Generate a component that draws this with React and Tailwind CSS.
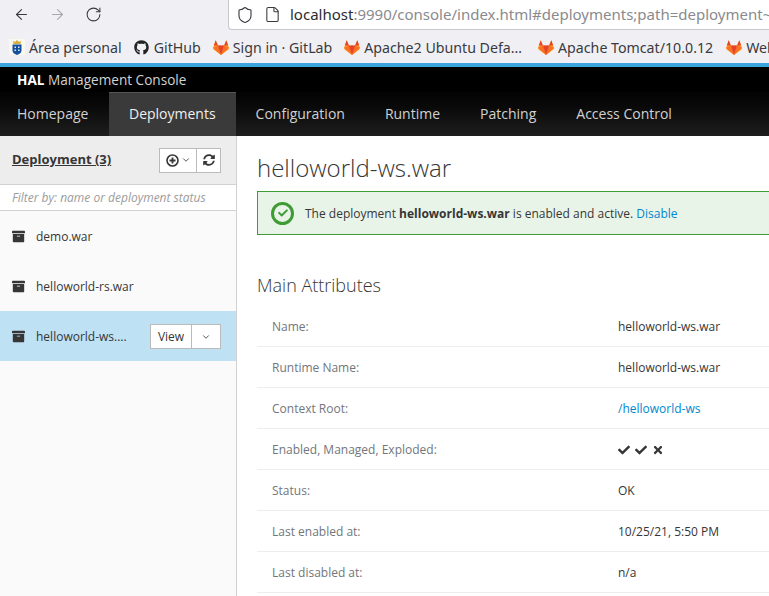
import { ArrowLeft, ArrowRight, RotateCw, Shield, File, ChevronDown } from 'lucide-react';
import { FaCheck, FaTimes, FaArchive, FaGithub, FaSyncAlt } from 'react-icons/fa';

const navItems = ['Homepage', 'Deployments', 'Configuration', 'Runtime', 'Patching', 'Access Control'];

const attributes = [
  { label: 'Name:', value: 'helloworld-ws.war' },
  { label: 'Runtime Name:', value: 'helloworld-ws.war' },
  { label: 'Context Root:', value: '/helloworld-ws', link: true },
  { label: 'Enabled, Managed, Exploded:', flags: true },
  { label: 'Status:', value: 'OK' },
  { label: 'Last enabled at:', value: '10/25/21, 5:50 PM' },
  { label: 'Last disabled at:', value: 'n/a' },
];

function GitlabIcon() {
  return (
    <svg width="16" height="15" viewBox="0 0 16 15" className="shrink-0">
      <path d="M8 15 0.5 9.5 0 7.8 2.7 0.2 4.9 5.6H11.1L13.3 0.2 16 7.8 15.5 9.5Z" fill="#fca326" />
      <path d="M8 15 0 7.8 4.9 5.6ZM8 15 16 7.8 11.1 5.6Z" fill="#fc6d26" />
      <path d="M8 15 4.9 5.6H11.1Z" fill="#e24329" />
      <path d="M2.7 0.2 4.9 5.6H0.9ZM13.3 0.2 11.1 5.6H15.1Z" fill="#e24329" />
    </svg>
  );
}

function CanaryIcon() {
  return (
    <svg width="16" height="16" viewBox="0 0 16 16" className="shrink-0">
      <rect width="16" height="16" fill="#fbf8ee" />
      <path d="M4.5 5 4 1.8 6 3 8 1 10 3 12 1.8 11.5 5Z" fill="#d9ad3c" />
      <path d="M3.5 5.5H12.5V11.5C12.5 14 10 15.2 8 16 6 15.2 3.5 14 3.5 11.5Z" fill="#14509e" />
      <path d="M5.5 7.5H7V9H5.5ZM9 7.5H10.5V9H9ZM5.5 10.5H7V12H5.5ZM9 10.5H10.5V12H9Z" fill="#dfe8f4" />
    </svg>
  );
}

function Bookmark({ icon, label, className }) {
  return (
    <div className={`flex items-center gap-[4px] shrink-0 ${className}`}>
      {icon}
      <span className="whitespace-nowrap">{label}</span>
    </div>
  );
}

function BrowserChrome() {
  return (
    <div className="bg-[#f0f0f4] text-[#3a3a40] font-['Noto_Sans',sans-serif]">
      <div className="h-[30px] flex items-start">
        <div className="w-[228px] flex items-center pl-[13px] pt-[6px] shrink-0">
          <ArrowLeft size={17} strokeWidth={1.5} />
          <ArrowRight size={17} strokeWidth={1.5} className="ml-[19px] text-[#a8a8ac]" />
          <RotateCw size={17} strokeWidth={1.5} className="ml-[19px]" />
        </div>
        <div className="flex-1 h-[30px] bg-white border-l border-b border-[#c8c8cc] rounded-bl-[4px] flex items-center pl-[7px] overflow-hidden">
          <Shield size={18} strokeWidth={1.5} className="shrink-0" />
          <File size={17} strokeWidth={1.5} className="ml-[10px] shrink-0" />
          <span className="ml-[9px] text-[15px] whitespace-nowrap text-[#8a8a8e]">
            <span className="text-[#2b2b30]">localhost</span>:9990/console/index.html#deployments;path=deployment~
          </span>
        </div>
      </div>
      <div className="h-[33px] flex items-center pt-[2px] pl-[9px] text-[14.2px] overflow-hidden">
        <Bookmark icon={<CanaryIcon />} label="Área personal" />
        <Bookmark className="ml-[12px] gap-[5px]" icon={<FaGithub size={15} className="text-[#222]" />} label="GitHub" />
        <Bookmark className="ml-[12px] gap-[3px]" icon={<GitlabIcon />} label="Sign in · GitLab" />
        <Bookmark className="ml-[12px]" icon={<GitlabIcon />} label="Apache2 Ubuntu Defa…" />
        <Bookmark className="ml-[16px]" icon={<GitlabIcon />} label="Apache Tomcat/10.0.12" />
        <Bookmark className="ml-[13px]" icon={<GitlabIcon />} label="Wel" />
      </div>
    </div>
  );
}

function TopNav() {
  return (
    <>
      <div className="h-[4px] bg-[#39a5dc]" />
      <div className="h-[25px] bg-black text-[13.6px] leading-[25px] pl-[17px] text-[#d1d1d1]">
        <span className="font-bold text-white">HAL</span> Management Console
      </div>
      <div className="h-[44px] flex bg-gradient-to-b from-[#030303] to-[#1e1e1e] text-[14px] text-[#d1d1d1]">
        {navItems.map((item) => (
          <div
            key={item}
            className={`px-[20px] first:pl-[17px] first:pr-[20.6px] pb-[2px] flex items-center ${item === 'Deployments' ? 'bg-[#3a3a3a] border-t border-[#555] text-[#f0f0f0]' : ''}`}
          >
            {item}
          </div>
        ))}
      </div>
    </>
  );
}

function Sidebar() {
  return (
    <div className="w-[237px] shrink-0 bg-[#fafafa] border-r border-[#d1d1d1] text-[#363636]">
      <div className="h-[48px] bg-[#ededed] flex items-center justify-between pl-[12px] pr-[15px]">
        <span className="font-bold text-[13px] underline">Deployment (3)</span>
        <div className="flex h-[25px] bg-white border border-[#bbb]">
          <div className="w-[37px] flex items-center justify-center border-r border-[#bbb] gap-[2px]">
            <svg width="13" height="13" viewBox="0 0 13 13" fill="none" stroke="#363636" className="shrink-0">
              <circle cx="6.5" cy="6.5" r="5.5" strokeWidth="1.6" />
              <path d="M6.5 3.5V9.5M3.5 6.5H9.5" strokeWidth="1.8" />
            </svg>
            <ChevronDown size={10} className="shrink-0" />
          </div>
          <div className="w-[23px] flex items-center justify-center">
            <FaSyncAlt size={12} />
          </div>
        </div>
      </div>
      <div className="h-[27px] bg-white border-y border-[#d1d1d1] pl-[12px] flex items-center text-[12px] italic text-[#9c9c9c]">
        Filter by: name or deployment status
      </div>
      <div className="h-[50px] flex items-center pl-[12px] text-[12px]">
        <FaArchive size={13} />
        <span className="ml-[11px] pt-[2px]">demo.war</span>
      </div>
      <div className="h-[50px] flex items-center pl-[12px] text-[12px]">
        <FaArchive size={13} />
        <span className="ml-[11px] pt-[2px]">helloworld-rs.war</span>
      </div>
      <div className="h-[50px] flex items-center pl-[12px] pr-[15px] text-[12px] bg-[#bee1f4]">
        <FaArchive size={13} />
        <span className="ml-[11px] pt-[2px]">helloworld-ws....</span>
        <div className="ml-auto flex h-[25px] mt-[1px] bg-white border border-[#bbb]">
          <div className="w-[41px] flex items-center justify-center border-r border-[#bbb] font-medium">View</div>
          <div className="w-[28px] flex items-center justify-center">
            <ChevronDown size={10} />
          </div>
        </div>
      </div>
    </div>
  );
}

function Content() {
  return (
    <div className="flex-1 min-w-0 pl-[20px] text-[#363636] overflow-hidden">
      <h1 className="mt-[16px] text-[24px] leading-[32px] font-light">helloworld-ws.war</h1>
      <div className="mt-[7px] h-[44px] w-[700px] bg-[#e9f4e9] border border-[#3f9c35] flex items-center pl-[13px] text-[12px]">
        <div className="w-[23px] h-[23px] rounded-full border-[3px] border-[#3f9c35] flex items-center justify-center shrink-0">
          <FaCheck size={10} className="text-[#3f9c35]" />
        </div>
        <span className="ml-[11px] pt-[2px]">
          The deployment <b>helloworld-ws.war</b> is enabled and active. <span className="text-[#0088ce]">Disable</span>
        </span>
      </div>
      <h2 className="mt-[37px] text-[18px] leading-[26px] font-light">Main Attributes</h2>
      <div className="mt-[8px] text-[12px]">
        {attributes.map((attr) => (
          <div key={attr.label} className="h-[41px] pt-[2px] flex items-center border-b border-[#ededed]">
            <div className="w-[361px] shrink-0 pl-[15px] text-[#72767b]">{attr.label}</div>
            {attr.flags ? (
              <div className="flex gap-[5px]">
                <FaCheck size={12} />
                <FaCheck size={12} />
                <FaTimes size={12} />
              </div>
            ) : (
              <div className={attr.link ? 'text-[#0088ce]' : ''}>{attr.value}</div>
            )}
          </div>
        ))}
      </div>
    </div>
  );
}

export default function App() {
  return (
    <div className="h-[596px] overflow-hidden bg-white font-['Open_Sans',sans-serif]">
      <BrowserChrome />
      <TopNav />
      <div className="flex h-[460px]">
        <Sidebar />
        <Content />
      </div>
    </div>
  );
}
